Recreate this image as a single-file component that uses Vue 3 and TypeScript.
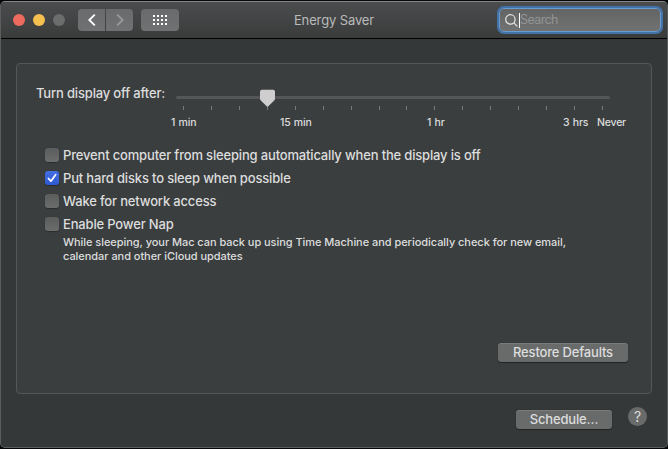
<script setup lang="ts">
import { ref } from 'vue'

interface Option {
  label: string
  checked: boolean
}

const options = ref<Option[]>([
  { label: 'Prevent computer from sleeping automatically when the display is off', checked: false },
  { label: 'Put hard disks to sleep when possible', checked: true },
  { label: 'Wake for network access', checked: false },
  { label: 'Enable Power Nap', checked: false },
])

const ticks: number[] = Array.from({ length: 16 }, (_, i) => Math.round(7 + i * 27.93))
const dots: number[] = [0, 4, 8, 12]
const rows: number[] = [0, 4, 8]
</script>

<template>
  <div class="window">
    <header class="titlebar">
      <div class="left">
        <div class="lights">
          <i class="light red"></i><i class="light yellow"></i><i class="light grey"></i>
        </div>
        <div class="nav">
          <button class="tool back" aria-label="Back">
            <svg width="8" height="12" viewBox="0 0 8 12"><path d="M6.8.7 1.3 6l5.5 5.3" /></svg>
          </button>
          <button class="tool forward" aria-label="Forward">
            <svg width="8" height="12" viewBox="0 0 8 12"><path d="M1.2.7 6.7 6l-5.5 5.3" /></svg>
          </button>
        </div>
        <button class="tool grid" aria-label="Show all">
          <svg width="14" height="10" viewBox="0 0 14 10">
            <template v-for="y in rows" :key="y">
              <rect v-for="x in dots" :key="x" :x="x" :y="y" width="2" height="2" />
            </template>
          </svg>
        </button>
      </div>
      <h1 class="title">Energy Saver</h1>
      <div class="right">
        <div class="search">
          <svg width="13" height="13" viewBox="0 0 13 13"><circle cx="5.4" cy="5.4" r="4.7" /><path d="m8.8 8.8 3.6 3.6" /></svg>
          <i class="caret"></i>
          <span class="placeholder">Search</span>
        </div>
      </div>
    </header>

    <main class="content">
      <section class="panel">
        <div class="slider-row">
          <span class="slider-label">Turn display off after:</span>
          <svg class="slider" width="434" height="25" viewBox="0 0 434 25">
            <rect class="track" x="0" y="9" width="434" height="3" rx="1.5" />
            <rect v-for="x in ticks" :key="x" class="tick" :x="x" y="19" width="1" height="4" />
            <path class="thumb" d="M84 4.5Q84 2.7 86 2.7H97Q99 2.7 99 4.5V11.8Q99 12.8 98.2 13.5L92.6 19.1Q91.5 20.2 90.4 19.1L84.8 13.5Q84 12.8 84 11.8Z" />
          </svg>
        </div>
        <div class="scale">
          <span>1 min</span><span>15 min</span><span>1 hr</span><span>3 hrs</span><span>Never</span>
        </div>

        <div class="options">
          <label v-for="o in options" :key="o.label" class="option" @click="o.checked = !o.checked">
            <span class="box" :class="{ on: o.checked }">
              <svg v-if="o.checked" width="14" height="14" viewBox="0 0 14 14"><path d="M3.4 7.5 5.9 10.2 10.6 3.7" /></svg>
            </span>
            <span class="text">{{ o.label }}</span>
          </label>
        </div>
        <p class="note">
          While sleeping, your Mac can back up using Time Machine and periodically check for new email,<br />
          calendar and other iCloud updates
        </p>

        <button class="push restore">Restore Defaults</button>
      </section>
      <footer class="footer">
        <button class="push schedule">Schedule…</button>
        <button class="help">?</button>
      </footer>
    </main>
  </div>
</template>

<style>
body {
  background: #050607;
}
#app {
  display: flow-root;
}
</style>

<style scoped>
* {
  box-sizing: border-box;
}
.window {
  width: 668px;
  height: 447px;
  margin-top: 1px;
  border: 1px solid #5b5e5e;
  border-top-color: #858686;
  border-radius: 5px;
  background: #353839;
  overflow: hidden;
  font-family: Inter, "Liberation Sans", sans-serif;
  font-size: 13px;
  font-weight: 500;
  letter-spacing: -0.17px;
  color: #dcdddd;
}
button {
  border: 0;
  padding: 0;
  font: inherit;
  letter-spacing: inherit;
  color: inherit;
}
svg {
  display: block;
}
.titlebar {
  height: 37px;
  display: grid;
  grid-template-columns: 1fr auto 1fr;
  align-items: center;
  background: linear-gradient(#4a4c4d, #3a3c3c);
  border-bottom: 1px solid #000;
}
.left {
  display: flex;
  align-items: center;
  padding-left: 12px;
}
.lights {
  display: flex;
  gap: 8px;
  margin-right: 13px;
}
.light {
  width: 12px;
  height: 12px;
  border-radius: 50%;
}
.red { background: #ed6a5e; }
.yellow { background: #f5c04f; }
.grey { background: #6b6d6d; }
.nav {
  display: flex;
  gap: 1px;
  margin-right: 8px;
}
.tool {
  width: 27px;
  height: 22px;
  display: flex;
  align-items: center;
  justify-content: center;
  background: linear-gradient(#696b6c, #707172);
}
.tool path {
  fill: none;
  stroke: #fff;
  stroke-width: 1.8;
}
.back { border-radius: 4px 0 0 4px; }
.tool.forward { border-radius: 0 4px 4px 0; }
.tool.forward path { stroke: #989999; }
.tool.grid {
  width: 38px;
  border-radius: 4px;
  fill: #fff;
}
.title {
  margin: 0;
  font-size: 13px;
  font-weight: 400;
  color: #b9baba;
  letter-spacing: -0.12px;
}
.right {
  display: flex;
  justify-content: flex-end;
  padding-right: 6px;
}
.search {
  width: 162px;
  height: 24px;
  display: flex;
  align-items: center;
  padding-left: 5px;
  border: 1px solid #679bd2;
  border-radius: 5px;
  background: linear-gradient(#636565, #717272);
  box-shadow: 0 0 0 2px #4373a8;
}
.search svg {
  fill: none;
  stroke: #e4e4e4;
  stroke-width: 1.2;
}
.caret {
  width: 1px;
  height: 15px;
  margin-left: 1px;
  background: #fff;
}
.placeholder {
  color: #929494;
  font-size: 12.5px;
  font-weight: 400;
  line-height: 14px;
  letter-spacing: -0.6px;
}
.content {
  padding: 24px 15px 0;
}
.panel {
  height: 331px;
  padding: 23px 23px 0 19px;
  border: 1px solid #545757;
  border-radius: 4px;
  background: #3b3e3f;
  display: flex;
  flex-direction: column;
}
.slider-row {
  display: flex;
  height: 25px;
}
.slider-label {
  width: 140px;
  flex-shrink: 0;
  line-height: 13px;
  white-space: nowrap;
}
.slider {
  flex-shrink: 0;
}
.track { fill: #555757; }
.tick { fill: #777979; }
.thumb { fill: #cdcecd; }
.scale {
  display: grid;
  grid-template-columns: 109px 147px 136px 34px 40px;
  margin-left: 135px;
  height: 14px;
  margin-top: 4px;
  font-size: 10.5px;
  line-height: 14px;
  letter-spacing: -0.2px;
  word-spacing: 0.8px;
  white-space: nowrap;
}
.options {
  margin: 13px 0 0 9px;
}
.option {
  height: 23px;
  display: flex;
  align-items: center;
  white-space: nowrap;
}
.text {
  line-height: 16px;
}
.box {
  width: 14px;
  height: 14px;
  margin-right: 4px;
  border-radius: 3px;
  background: linear-gradient(#5b5d5d, #6b6d6d);
  box-shadow: 0 0.5px 1px #2a2c2c;
}
.box.on {
  background: linear-gradient(#4470e4, #2e58d0);
}
.box path {
  fill: none;
  stroke: #fff;
  stroke-width: 1.7;
  stroke-linecap: round;
  stroke-linejoin: round;
}
.note {
  margin: 0 0 0 27px;
  font-size: 11px;
  line-height: 14px;
  letter-spacing: -0.045px;
  white-space: nowrap;
}
.push {
  height: 19px;
  border-radius: 3.5px;
  background: #696b6b;
  box-shadow: 0 0.5px 1px #222424, inset 0 1px 0 #7a7c7c;
  line-height: 19px;
}
.restore {
  width: 130px;
  margin: auto 0 31px auto;
}
.footer {
  display: flex;
  justify-content: flex-end;
  align-items: flex-start;
  gap: 16px;
  padding: 13px 5px 0 0;
}
.schedule {
  width: 96px;
  margin-top: 3px;
}
.help {
  width: 19px;
  height: 19px;
  border-radius: 50%;
  background: #696b6b;
  font-size: 14px;
  font-weight: 400;
  line-height: 19px;
}
</style>
